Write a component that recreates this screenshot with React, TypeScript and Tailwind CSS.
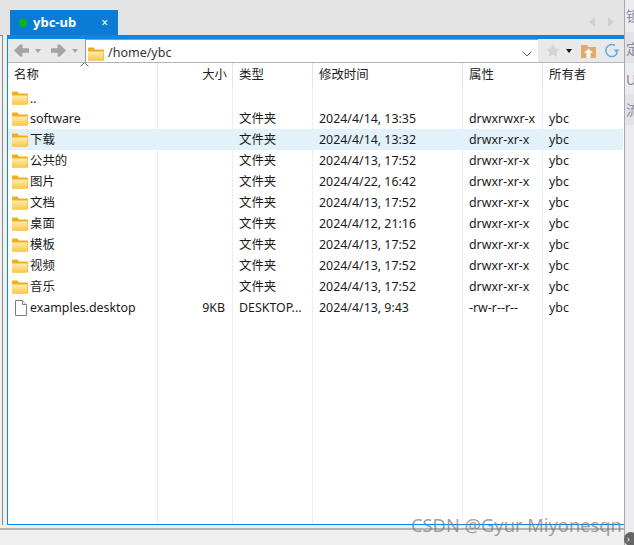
const rows = [
  { name: "..", size: "", type: "", time: "", attr: "", owner: "" },
  { name: "software", size: "", type: "文件夹", time: "2024/4/14, 13:35", attr: "drwxrwxr-x", owner: "ybc" },
  { name: "下载", size: "", type: "文件夹", time: "2024/4/14, 13:32", attr: "drwxr-xr-x", owner: "ybc", selected: true },
  { name: "公共的", size: "", type: "文件夹", time: "2024/4/13, 17:52", attr: "drwxr-xr-x", owner: "ybc" },
  { name: "图片", size: "", type: "文件夹", time: "2024/4/22, 16:42", attr: "drwxr-xr-x", owner: "ybc" },
  { name: "文档", size: "", type: "文件夹", time: "2024/4/13, 17:52", attr: "drwxr-xr-x", owner: "ybc" },
  { name: "桌面", size: "", type: "文件夹", time: "2024/4/12, 21:16", attr: "drwxr-xr-x", owner: "ybc" },
  { name: "模板", size: "", type: "文件夹", time: "2024/4/13, 17:52", attr: "drwxr-xr-x", owner: "ybc" },
  { name: "视频", size: "", type: "文件夹", time: "2024/4/13, 17:52", attr: "drwxr-xr-x", owner: "ybc" },
  { name: "音乐", size: "", type: "文件夹", time: "2024/4/13, 17:52", attr: "drwxr-xr-x", owner: "ybc" },
  { name: "examples.desktop", size: "9KB", type: "DESKTOP...", time: "2024/4/13, 9:43", attr: "-rw-r--r--", owner: "ybc", file: true },
];

function FolderIcon() {
  return (
    <svg width="17" height="14" viewBox="0 0 17 14" className="shrink-0">
      <defs>
        <linearGradient id="fold" x1="0" y1="0" x2="0" y2="1">
          <stop offset="0" stopColor="#ffeeb0" />
          <stop offset="1" stopColor="#fbc64a" />
        </linearGradient>
      </defs>
      <path d="M1 1.500q0-1 1-1h4.500l1.500 2h8q1 0 1 1v9q0 1-1 1H2q-1 0-1-1z" fill="#f2ae1c" />
      <path d="M1 4.500h15.500v8q0 1-1 1H2q-1 0-1-1z" fill="url(#fold)" />
    </svg>
  );
}

function FileIcon() {
  return (
    <svg width="13" height="16" viewBox="0 0 13 16" className="shrink-0">
      <path d="M1.500.5h7l4 4v11h-11z" fill="#fff" stroke="#7d7d7d" />
      <path d="M8.500.5v4h4" fill="#f0f0f0" stroke="#7d7d7d" />
    </svg>
  );
}

function Arrow({ flip }: { flip?: boolean }) {
  return (
    <svg width="15" height="13" viewBox="0 0 16 13" style={flip ? { transform: "scaleX(-1)" } : undefined}>
      <path d="M0 6.500 6.500 0h2.500v4h7v5h-7v4H6.500z" fill="#a3a3a3" />
    </svg>
  );
}

function Caret({ color = "#a3a3a3" }: { color?: string }) {
  return (
    <svg width="6" height="4" viewBox="0 0 6 4">
      <path d="M0 0h6L3 4z" fill={color} />
    </svg>
  );
}

function Row({ row }: { row: (typeof rows)[number] }) {
  const sep = "border-r border-[#e8f1fb] h-full flex items-center pt-[1px]";
  return (
    <div className={`flex h-[21px] shrink-0 ${row.selected ? "bg-[#e3f1fb]" : ""}`}>
      <div className={`${sep} w-[150px] pl-[3px]`}>
        <span className="w-[19px] flex justify-start">
          {row.file ? <span className="pl-[3px]"><FileIcon /></span> : <FolderIcon />}
        </span>
        <span className={row.name === ".." ? "pt-[2px]" : ""}>{row.name}</span>
      </div>
      <div className={`${sep} w-[75px] justify-end pr-[7px]`}>{row.size}</div>
      <div className={`${sep} w-[80px] pl-[6px]`}>{row.type}</div>
      <div className={`${sep} w-[150px] pl-[6px]`}>{row.time}</div>
      <div className={`${sep} w-[80px] pl-[6px]`}>{row.attr}</div>
      <div className="h-full flex items-center pl-[6px] pt-[1px]">{row.owner}</div>
    </div>
  );
}

function Header() {
  const sep = "border-r border-[#e5e5e5] h-full flex items-center";
  return (
    <div className="flex h-[24px] text-[#222] shrink-0">
      <div className={`${sep} w-[150px] pl-[6px]`}>名称</div>
      <div className={`${sep} w-[75px] justify-end pr-[5px]`}>大小</div>
      <div className={`${sep} w-[80px] pl-[6px]`}>类型</div>
      <div className={`${sep} w-[150px] pl-[6px]`}>修改时间</div>
      <div className={`${sep} w-[80px] pl-[6px]`}>属性</div>
      <div className="h-full flex items-center pl-[6px]">所有者</div>
    </div>
  );
}

export default function App() {
  return (
    <div className="relative flex w-[634px] h-[545px] overflow-hidden bg-[#efefef] font-['Noto_Sans','Noto_Sans_CJK_SC',sans-serif] text-[12.4px] text-[#1a1a1a]">
      <div className="flex flex-col w-[624px] shrink-0">
        {/* tab strip */}
        <div className="flex h-[35px] shrink-0 items-end justify-between bg-[#e4e4e4] pl-[10px] pr-[10px]">
          <div className="flex items-center w-[108px] h-[25px] bg-[#0a7cd6] pl-[9px] pr-[10px] text-white">
            <span className="w-[8px] h-[8px] rounded-full bg-[#0fb50f]" />
            <span className="ml-[6px] font-bold text-[13px]">ybc-ub</span>
            <span className="ml-auto text-[12px] leading-none">×</span>
          </div>
          <div className="flex gap-[13px] pb-[8px]">
            <svg width="6" height="10" viewBox="0 0 6 10"><path d="M6 0v10L0 5z" fill="#cfcfcf" /></svg>
            <svg width="6" height="10" viewBox="0 0 6 10"><path d="M0 0v10l6-5z" fill="#cfcfcf" /></svg>
          </div>
        </div>

        <div className="flex h-[490px] shrink-0">
          <div className="w-[7px] shrink-0 bg-[#f0f0f0]">
            <div className="h-full w-[3px] border-t border-r border-[#8a8a8a]" />
          </div>
          <div className="flex-1 flex flex-col border-t-[4px] border-l border-b border-[#0a87e6] bg-white min-w-0">
            {/* toolbar */}
            <div className="flex items-center h-[24px] bg-[#e9e9e9] border-b border-[#b4b4b4] shrink-0">
              <div className="flex items-center w-[77px] pl-[6px] shrink-0">
                <Arrow />
                <span className="ml-[6px] flex"><Caret /></span>
                <span className="ml-[10px] flex"><Arrow flip /></span>
                <span className="ml-[6px] flex"><Caret /></span>
              </div>
              <div className="flex items-center w-[453px] h-[23px] bg-white border-t border-l border-[#9a9a9a] pl-[1px] pr-[6px] pt-[5px]">
                <FolderIcon />
                <span className="ml-[4px] text-[12.5px] text-[#333]">/home/ybc</span>
                <svg className="ml-auto" width="10" height="6" viewBox="0 0 10 6">
                  <path d="M.5.5 5 5 9.500.5" fill="none" stroke="#666" />
                </svg>
              </div>
              <div className="flex items-center flex-1 pl-[8px]">
                <svg width="14" height="13" viewBox="0 0 24 23">
                  <path d="M12 0l3.700 7.600 8.300 1.200-6 5.900 1.400 8.300L12 19l-7.400 4L6 14.700 0 8.800l8.300-1.200z" fill="#d4d4d4" />
                </svg>
                <span className="ml-[6px] flex"><Caret color="#111" /></span>
                <svg className="ml-[9px]" width="15" height="14" viewBox="0 0 15 14">
                  <path d="M0 1h6l1.500 2H15v11H0z" fill="#e2a96a" />
                  <path d="M7.500 4.500 12 9H9.500v5h-4V9H3z" fill="#fff" />
                </svg>
                <svg className="ml-[8px]" width="16" height="15" viewBox="0 0 16 15">
                  <path d="M13.500 9.500A6 6 0 1 1 11 2.500" fill="none" stroke="#64a9e4" strokeWidth="1.500" />
                  <path d="M9.500 6.500h6L12.500 10z" fill="#64a9e4" />
                </svg>
              </div>
            </div>
            {/* file list */}
            <div className="relative flex flex-col flex-1 w-[615px] min-h-0">
              <svg className="absolute left-[72px] top-[-1px]" width="9" height="5" viewBox="0 0 9 5">
                <path d="M.5 4.500 4.500.5l4 4" fill="none" stroke="#777" />
              </svg>
              <Header />
              {rows.map((row) => (
                <Row key={row.name} row={row} />
              ))}
              <div className="flex flex-1">
                <div className="w-[150px] border-r border-[#e8f1fb]" />
                <div className="w-[75px] border-r border-[#e8f1fb]" />
                <div className="w-[80px] border-r border-[#e8f1fb]" />
                <div className="w-[150px] border-r border-[#e8f1fb]" />
                <div className="w-[80px] border-r border-[#e8f1fb]" />
              </div>
            </div>
          </div>
        </div>

        <div className="flex-1 mt-[3px] border-t-[2px] border-[#b4b4b4] bg-[#efefef]" />
      </div>

      {/* neighbouring window, cut off at the edge */}
      <div className="flex flex-col flex-1 border-l border-[#a8a8a8] bg-[#ececf0] overflow-hidden text-[14px] leading-none text-[#8a8a9c] whitespace-nowrap">
        <div className="h-[32px] pt-[9px] pl-[1px]">锁</div>
        <div className="h-[31px] pt-[10px] pl-[1px] bg-[#e2e2e8]">定</div>
        <div className="h-[31px] pt-[10px] pl-[1px]">U</div>
        <div className="h-[31px] pt-[9px] pl-[1px] bg-[#e2e2e8]">流</div>
      </div>

      {/* watermark and corner button */}
      <span className="absolute left-[411px] top-[514px] text-[18.3px] leading-[22px] text-[#777]/70">CSDN @Gyur Miyonesqn</span>
      <span className="absolute left-[624px] top-[532px] w-[14px] h-[14px] rounded-full bg-[#666] text-white text-[9px] leading-[14px] pl-[3px]">›</span>
    </div>
  );
}
